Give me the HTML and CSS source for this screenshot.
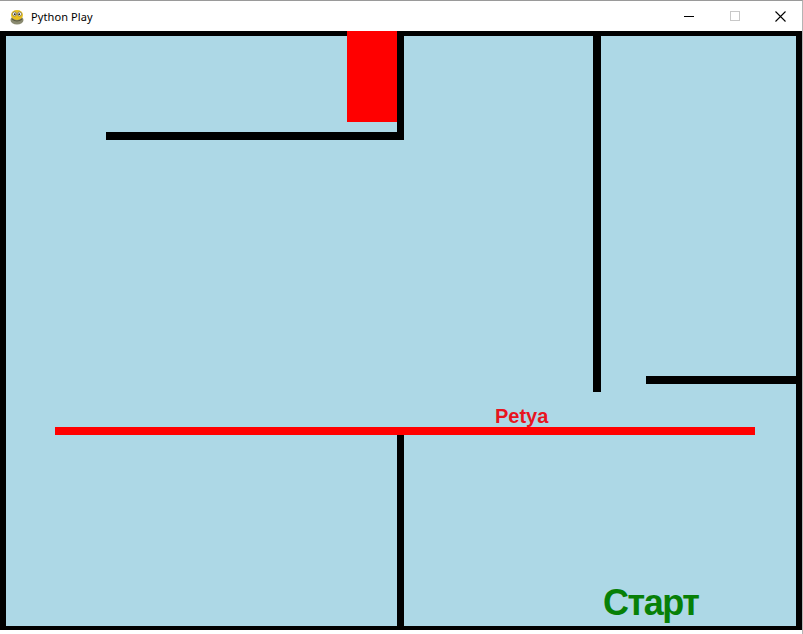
FILE: index.html
```html
<!DOCTYPE html>
<html>
<head>
<meta charset="utf-8">
<link rel="stylesheet" href="styles.css">
</head>
<body>
<div class="window">
  <div class="titlebar">
    <svg class="app-icon" width="16" height="16" viewBox="0 0 16 16">
      <ellipse cx="8" cy="11" rx="6.5" ry="4.5" fill="#8a8a70"/>
      <ellipse cx="8" cy="6" rx="6" ry="5" fill="#e8c020"/>
      <circle cx="5.5" cy="5" r="2" fill="#fff" stroke="#555" stroke-width="0.6"/>
      <circle cx="10.5" cy="5" r="2" fill="#fff" stroke="#555" stroke-width="0.6"/>
      <circle cx="5.8" cy="5.2" r="0.9" fill="#222"/>
      <circle cx="10.2" cy="5.2" r="0.9" fill="#222"/>
      <path d="M3 10 Q8 14 13 10" stroke="#5a5a40" stroke-width="1.2" fill="none"/>
    </svg>
    <span class="title">Python Play</span>
    <div class="controls">
      <span class="ctl ctl-min"><span class="min-line"></span></span>
      <span class="ctl ctl-max"><span class="max-box"></span></span>
      <span class="ctl ctl-close">
        <svg width="11" height="11" viewBox="0 0 11 11"><path d="M0.5 0.5 L10.5 10.5 M10.5 0.5 L0.5 10.5" stroke="#000" stroke-width="1.1"/></svg>
      </span>
    </div>
  </div>
  <div class="canvas">
    <div class="wall wall-top-h"></div>
    <div class="wall wall-top-v"></div>
    <div class="block-red"></div>
    <div class="wall wall-right-v"></div>
    <div class="wall wall-right-h"></div>
    <div class="red-line"></div>
    <div class="wall wall-bottom-v"></div>
    <div class="label-petya">Petya</div>
    <div class="label-start">Старт</div>
  </div>
</div>
</body>
</html>
```

FILE: styles.css
```css
html, body {
  margin: 0;
  padding: 0;
  background: #ffffff;
}
.window {
  width: 803px;
  height: 634px;
  box-sizing: border-box;
  border-top: 1px solid #9a9a9a;
  border-right: 1px solid #b4b4b4;
  background: #ffffff;
  overflow: hidden;
}
.titlebar {
  height: 30px;
  display: flex;
  align-items: center;
  background: #ffffff;
}
.app-icon {
  margin-left: 9px;
  margin-top: 1px;
}
.title {
  margin-left: 6px;
  font-family: "Noto Sans", "Open Sans", sans-serif;
  font-size: 11px;
  letter-spacing: 0.1px;
  color: #000;
  margin-top: 1px;
}
.controls {
  margin-left: auto;
  display: flex;
  height: 30px;
}
.ctl {
  width: 46px;
  height: 30px;
  display: flex;
  align-items: center;
  justify-content: center;
}
.min-line {
  display: block;
  width: 10px;
  height: 1px;
  background: #000;
}
.max-box {
  display: block;
  width: 8px;
  height: 8px;
  border: 1px solid #c8c8c8;
}
.ctl-close {
  width: 44px;
}
.ctl-close svg {
  display: block;
}
.canvas {
  position: relative;
  width: 802px;
  height: 599px;
  background: #add8e6;
  box-sizing: border-box;
  border-top: 5px solid #000;
  border-left: 6px solid #000;
  border-right: 6px solid #000;
  border-bottom: 4px solid #000;
}
.wall {
  position: absolute;
  background: #000;
}
.wall-top-h { left: 100px; top: 96px; width: 298px; height: 8px; }
.wall-top-v { left: 391px; top: -5px; width: 7px; height: 109px; }
.block-red {
  position: absolute;
  left: 341px;
  top: -5px;
  width: 50px;
  height: 91px;
  background: #ff0000;
}
.wall-right-v { left: 587px; top: -5px; width: 8px; height: 361px; }
.wall-right-h { left: 640px; top: 340px; width: 156px; height: 8px; }
.red-line {
  position: absolute;
  left: 49px;
  top: 391px;
  width: 700px;
  height: 8px;
  background: #ff0000;
}
.wall-bottom-v { left: 391px; top: 399px; width: 7px; height: 191px; }
.label-petya {
  position: absolute;
  left: 489px;
  top: 370px;
  font-family: "Liberation Sans", Arial, sans-serif;
  font-weight: bold;
  font-size: 20px;
  line-height: 20px;
  color: #e8141e;
}
.label-start {
  position: absolute;
  left: 597px;
  top: 549px;
  font-family: "Liberation Sans", Arial, sans-serif;
  font-weight: bold;
  font-size: 36px;
  line-height: 36px;
  letter-spacing: -1.5px;
  color: #078007;
}
```
